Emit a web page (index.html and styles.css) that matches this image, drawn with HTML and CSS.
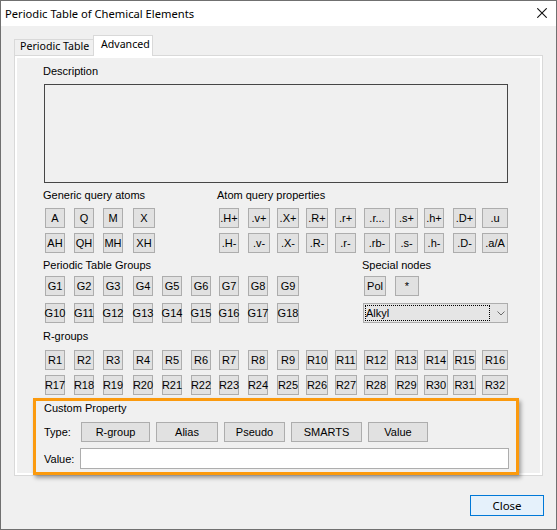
FILE: index.html
```html
<!DOCTYPE html>
<html lang="en">
<head>
<meta charset="utf-8">
<title>Periodic Table of Chemical Elements</title>
<link rel="stylesheet" href="styles.css">
</head>
<body>
<div class="window">
  <div class="titlebar">
    <span class="title">Periodic Table of Chemical Elements</span>
    <svg class="close-x" width="10" height="10" viewBox="0 0 10 10" aria-hidden="true"><path d="M0.3 0.3L9.7 9.7M9.7 0.3L0.3 9.7" stroke="#111" stroke-width="1.1" fill="none"/></svg>
  </div>
  <div class="client">
    <div class="tabs">
      <div class="tab">Periodic Table</div>
      <div class="tab active">Advanced</div>
    </div>
    <div class="pane">
      <div class="page">
        <div class="label">Description</div>
        <div class="desc"></div>

        <div class="row mt6">
          <span class="label span-left">Generic query atoms</span>
          <span class="label span-right">Atom query properties</span>
        </div>
        <div class="row mt6">
          <div class="btn">A</div><div class="btn">Q</div><div class="btn">M</div><div class="btn w22">X</div>
          <div class="btn c7">.H+</div><div class="btn w22">.v+</div><div class="btn w22">.X+</div><div class="btn w22">.R+</div><div class="btn w21">.r+</div><div class="btn w26">.r...</div><div class="btn w23">.s+</div><div class="btn">.h+</div><div class="btn w23">.D+</div><div class="btn w26">.u</div>
        </div>
        <div class="row mt5">
          <div class="btn">AH</div><div class="btn">QH</div><div class="btn">MH</div><div class="btn w22">XH</div>
          <div class="btn c7">.H-</div><div class="btn w22">.v-</div><div class="btn w22">.X-</div><div class="btn w22">.R-</div><div class="btn w21">.r-</div><div class="btn w26">.rb-</div><div class="btn w23">.s-</div><div class="btn">.h-</div><div class="btn w23">.D-</div><div class="btn w26">.a/A</div>
        </div>

        <div class="row mt6">
          <span class="label span-groups">Periodic Table Groups</span>
          <span class="label span-special">Special nodes</span>
        </div>
        <div class="row mt4">
          <div class="btn">G1</div><div class="btn">G2</div><div class="btn">G3</div><div class="btn">G4</div><div class="btn">G5</div><div class="btn">G6</div><div class="btn">G7</div><div class="btn">G8</div><div class="btn w22">G9</div>
          <div class="btn w22 c12">Pol</div><div class="btn w24">*</div>
        </div>
        <div class="row mt7">
          <div class="btn">G10</div><div class="btn">G11</div><div class="btn">G12</div><div class="btn">G13</div><div class="btn">G14</div><div class="btn">G15</div><div class="btn">G16</div><div class="btn">G17</div><div class="btn w22">G18</div>
          <div class="combo">
            <span class="combo-text">Alkyl</span>
            <svg class="chev" width="8" height="5" viewBox="0 0 8 5" aria-hidden="true"><path d="M0.5 0.5L4 4L7.5 0.5" stroke="#6a6a6a" stroke-width="1" fill="none"/></svg>
          </div>
        </div>

        <div class="row mt7">
          <span class="label span-all">R-groups</span>
        </div>
        <div class="row mt7">
          <div class="btn">R1</div><div class="btn">R2</div><div class="btn">R3</div><div class="btn">R4</div><div class="btn">R5</div><div class="btn">R6</div><div class="btn">R7</div><div class="btn">R8</div><div class="btn w22">R9</div><div class="btn w22">R10</div><div class="btn w22">R11</div><div class="btn w24">R12</div><div class="btn w23">R13</div><div class="btn w24">R14</div><div class="btn w23">R15</div><div class="btn w26">R16</div>
        </div>
        <div class="row mt5">
          <div class="btn">R17</div><div class="btn">R18</div><div class="btn">R19</div><div class="btn">R20</div><div class="btn">R21</div><div class="btn">R22</div><div class="btn">R23</div><div class="btn">R24</div><div class="btn w22">R25</div><div class="btn w22">R26</div><div class="btn w22">R27</div><div class="btn w24">R28</div><div class="btn w23">R29</div><div class="btn w24">R30</div><div class="btn w23">R31</div><div class="btn w26">R32</div>
        </div>

        <div class="custom">
          <div class="cp-title">Custom Property</div>
          <div class="cp-row mt7">
            <span class="cp-label">Type:</span>
            <div class="btn2 w-rgroup">R-group</div>
            <div class="btn2 w-alias">Alias</div>
            <div class="btn2 w-pseudo">Pseudo</div>
            <div class="btn2 w-smarts">SMARTS</div>
            <div class="btn2 w-value">Value</div>
          </div>
          <div class="cp-row mt6">
            <span class="cp-label">Value:</span>
            <div class="input"></div>
          </div>
        </div>
      </div>
    </div>
    <div class="footer">
      <div class="close-btn">Close</div>
    </div>
  </div>
</div>
</body>
</html>
```

FILE: styles.css
```css
* { box-sizing: border-box; }
html, body { margin: 0; padding: 0; }
body {
  background: #ffffff;
  font-family: "Liberation Sans", Arial, sans-serif;
  font-size: 11px;
  color: #000;
}

.window {
  width: 557px;
  height: 530px;
  border: 1px solid #707070;
  background: #f0f0f0;
  display: flex;
  flex-direction: column;
}

.titlebar {
  flex: none;
  height: 25px;
  background: #fff;
  display: flex;
  align-items: center;
  justify-content: space-between;
  padding: 0 9px 0 4px;
}
.title {
  font-family: "Noto Sans", sans-serif;
  font-size: 11.2px;
  line-height: 16px;
}
.close-x { display: block; margin-top: -2px; }

.client {
  flex: 1;
  display: flex;
  flex-direction: column;
  padding: 9px 13px 0 13px;
}

.tabs {
  display: flex;
  align-items: flex-end;
  height: 21px;
  margin-bottom: -1px;
  position: relative;
  z-index: 1;
  font-family: "Noto Sans", sans-serif;
  font-size: 10.6px;
}
.tab {
  height: 16px;
  margin-bottom: 1px;
  width: 79px;
  border: 1px solid #d9d9d9;
  border-right: 0;
  border-bottom: 0;
  background: #f0f0f0;
  padding-left: 5px;
  line-height: 12px;
  white-space: nowrap;
}
.tab.active {
  height: 21px;
  margin-bottom: 0;
  width: 60px;
  border-right: 1px solid #d9d9d9;
  background: #fff;
  padding-left: 7px;
  line-height: 16px;
}

.pane {
  flex: none;
  height: 421px;
  border: 1px solid #d9d9d9;
  background: #fff;
  padding: 2px;
  display: flex;
}
.page {
  flex: 1;
  background: #f0f0f0;
  padding: 7px 0 0 26px;
}

.label {
  display: block;
  line-height: 13px;
  white-space: nowrap;
}
.desc {
  margin: 6px 0 0 1px;
  width: 464px;
  height: 99px;
  border: 1px solid #464646;
}

.row {
  display: grid;
  grid-template-columns: 29px 29px 30px 29px 29px 28px 29px 29px 29px 29px 29px 31px 29px 29px 29px 26px;
  margin-left: 2px;
  align-items: center;
}
.row .label { margin-left: -2px; }
.span-left { grid-column: 1 / 7; }
.span-right { grid-column: 7 / -1; }
.span-groups { grid-column: 1 / 12; }
.span-special { grid-column: 12 / -1; }
.span-all { grid-column: 1 / -1; }
.c7 { grid-column-start: 7; }
.c12 { grid-column-start: 12; }

.mt4 { margin-top: 4px; }
.mt5 { margin-top: 5px; }
.mt6 { margin-top: 6px; }
.mt7 { margin-top: 7px; }

.btn {
  justify-self: start;
  width: 20px;
  height: 20px;
  border: 1px solid #adadad;
  background: #e1e1e1;
  display: flex;
  align-items: center;
  justify-content: center;
  white-space: nowrap;
}
.w21 { width: 21px; }
.w22 { width: 22px; }
.w23 { width: 23px; }
.w24 { width: 24px; }
.w26 { width: 26px; }

.combo {
  grid-column: 12 / -1;
  margin-left: -1px;
  height: 20px;
  border: 1px solid #adadad;
  background: #e5e5e5;
  display: flex;
  align-items: center;
  padding: 1px;
}
.combo-text {
  width: 125px;
  height: 100%;
  border: 1px dotted #000;
  display: flex;
  align-items: center;
}
.chev { display: block; margin-left: 7px; }

.custom {
  margin: 3px 0 0 -10px;
  width: 486px;
  border: 3px solid #fb9a0e;
  box-shadow: 2px 3px 4px rgba(0, 0, 0, 0.35);
  padding: 0 6px 3px 8px;
  font-size: 11px;
}
.cp-title { line-height: 14px; }
.cp-row { display: flex; align-items: center; }
.cp-label { width: 37px; flex: none; }
.btn2 {
  flex: none;
  height: 20px;
  border: 1px solid #adadad;
  background: #e1e1e1;
  display: flex;
  align-items: center;
  justify-content: center;
  margin-right: 6px;
}
.w-rgroup { width: 69px; }
.w-alias { width: 62px; }
.w-pseudo { width: 61px; }
.w-smarts { width: 71px; }
.w-value { width: 60px; }
.input {
  width: 429px;
  height: 21px;
  margin-left: -1px;
  background: #fff;
  border: 1px solid #adadad;
}

.footer {
  display: flex;
  justify-content: flex-end;
  margin-top: 19px;
  margin-right: -1px;
}
.close-btn {
  width: 74px;
  height: 21px;
  border: 1px solid #0078d7;
  background: #e5f1fb;
  display: flex;
  align-items: center;
  justify-content: center;
  font-family: "Noto Sans", sans-serif;
  font-size: 11.5px;
}
```
